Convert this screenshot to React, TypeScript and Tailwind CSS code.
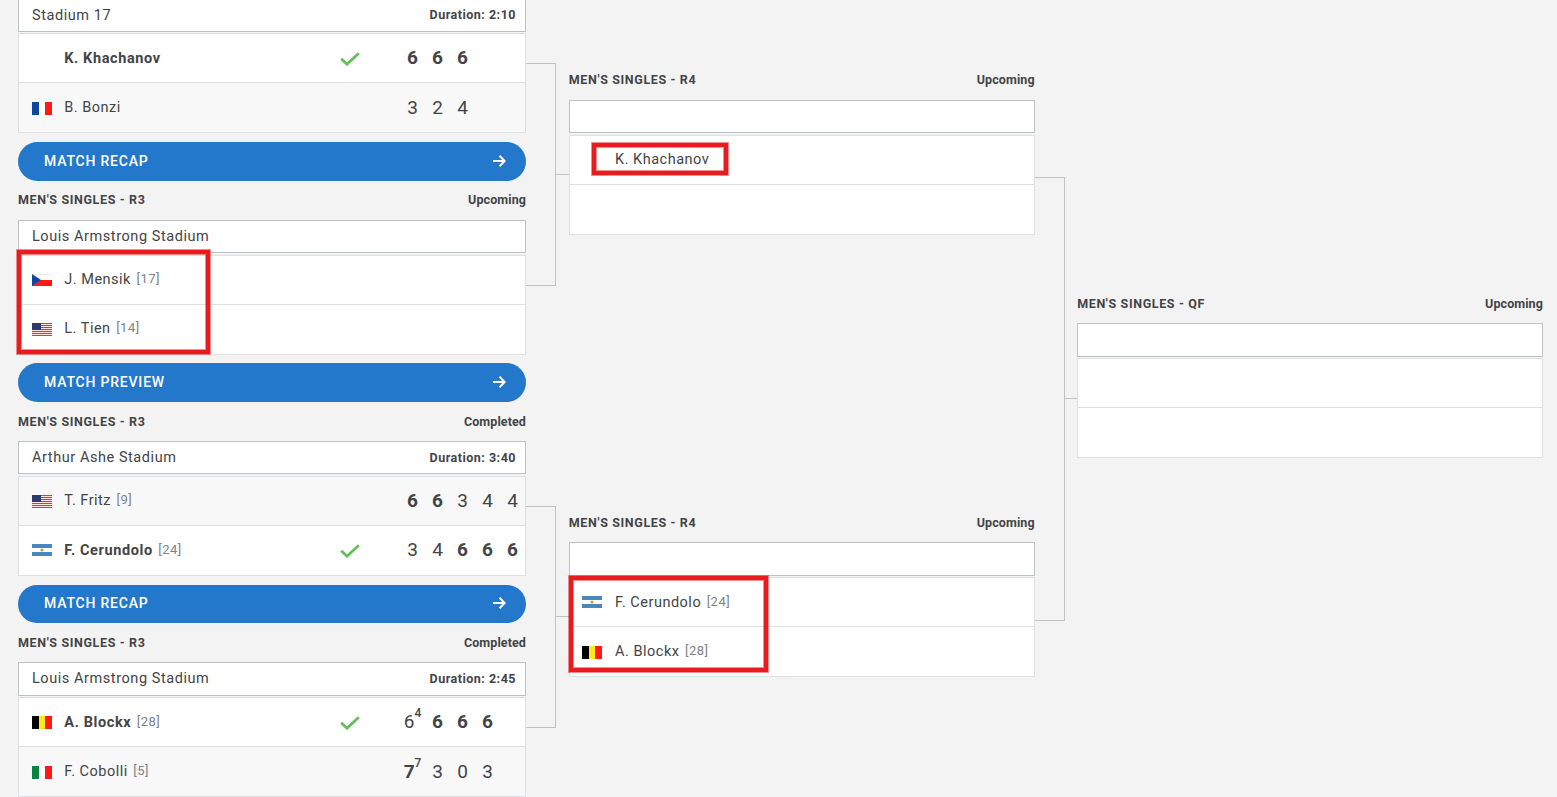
import React from 'react';

type Country = 'FRA' | 'CZE' | 'USA' | 'ARG' | 'BEL' | 'ITA';

type Score = {
  games: number;
  won?: boolean;
  tiebreak?: number;
};

type Player = {
  name?: string;
  country?: Country;
  seed?: number;
  winner?: boolean;
  loser?: boolean;
  scores?: Score[];
};

type MatchProps = {
  round?: string;
  status?: string;
  court?: string;
  duration?: string;
  players: [Player, Player];
  action?: string;
};

const w = (games: number, tiebreak?: number): Score => ({ games, won: true, tiebreak });
const l = (games: number, tiebreak?: number): Score => ({ games, tiebreak });

const stripes: Partial<Record<Country, [string, string, string]>> = {
  FRA: ['#0d479f', '#ffffff', '#ff1a14'],
  BEL: ['#000000', '#ffe81c', '#ff1a14'],
  ITA: ['#0b8442', '#ffffff', '#ff1a14'],
};

function Flag({ country }: { country: Country }) {
  const bands = stripes[country];
  return (
    <svg width="20" height="13" viewBox="0 0 20 13" shapeRendering="crispEdges">
      {bands && (
        <>
          <rect width="7" height="13" fill={bands[0]} />
          <rect x="7" width="6" height="13" fill={bands[1]} />
          <rect x="13" width="7" height="13" fill={bands[2]} />
        </>
      )}
      {country === 'CZE' && (
        <>
          <rect width="20" height="1" fill="#ececec" />
          <rect y="1" width="20" height="5" fill="#fff" />
          <rect y="6" width="20" height="6" fill="#ff1a14" />
          <path d="M0 0L9 6L0 12Z" fill="#0d479f" shapeRendering="auto" />
        </>
      )}
      {country === 'USA' && (
        <>
          <rect width="20" height="13" fill="#ffe3dc" />
          {[0, 2, 4, 6, 8, 10, 12].map((y) => (
            <rect key={y} y={y} width="20" height="1" fill="#f0302a" />
          ))}
          <rect width="9" height="7" fill="#2b3a70" />
        </>
      )}
      {country === 'ARG' && (
        <>
          <rect width="20" height="12" fill="#4a86bf" />
          <rect y="4" width="20" height="4" fill="#fff" />
          <circle cx="10" cy="6" r="1.6" fill="#b5a642" shapeRendering="auto" />
        </>
      )}
    </svg>
  );
}

function PlayerRow({ player, first }: { player: Player; first?: boolean }) {
  const weight = player.winner ? 'font-bold tracking-[0.6px]' : 'tracking-[0.5px]';
  return (
    <div
      className={`flex items-center pl-[12.5px] ${first ? 'h-[48.95px] border-b border-[#dfe0e1]' : 'h-[48.85px]'} ${
        player.loser ? 'bg-[#f8f8f8]' : 'bg-white'
      }`}
    >
      <div className="mt-[1.2px] w-[32.8px] shrink-0">{player.country && <Flag country={player.country} />}</div>
      <div className={`flex-1 whitespace-nowrap pt-[0.8px] text-[14.5px] leading-5 ${weight}`}>
        {player.name}
        {player.seed && (
          <span className="relative -top-px ml-[5.5px] text-[13px] font-normal tracking-[0.5px] text-[#808286]">
            [{player.seed}]
          </span>
        )}
      </div>
      {player.winner && (
        <svg className="mr-[40.5px] mt-[2px]" width="20" height="14" viewBox="0 0 20 14" fill="none">
          <path d="M1.2 6.8L7 12.2L18.8 1.2" stroke="#63bf58" strokeWidth="2.8" />
        </svg>
      )}
      {player.scores && (
        <div className="flex w-[125px] text-[19px] leading-6">
          {player.scores.map((score, i) => (
            <div key={i} className="flex w-[25px] justify-center">
              <span className={score.won ? 'font-bold' : ''}>{score.games}</span>
              {score.tiebreak !== undefined && (
                <span className="-mt-[5px] text-[12px] font-medium leading-4">{score.tiebreak}</span>
              )}
            </div>
          ))}
        </div>
      )}
    </div>
  );
}

function Match({ round, status, court, duration, players, action }: MatchProps) {
  return (
    <div>
      {round && (
        <div className="flex h-[39.05px] items-center justify-between pt-px text-[12.5px] font-bold">
          <span className="tracking-[0.63px]">{round}</span>
          <span className="tracking-[0.1px]">{status}</span>
        </div>
      )}
      <div className="flex h-[33.45px] items-center justify-between border border-[#bfc3c6] bg-white pl-[13px] pr-[9px]">
        <span className="pt-[0.6px] text-[14.5px] tracking-[0.56px]">{court}</span>
        <span className="pt-[0.8px] text-[12.5px] font-bold tracking-[0.5px]">{duration}</span>
      </div>
      <div className="mt-[1.58px] h-[99.8px] border border-[#dfe0e1]">
        <PlayerRow player={players[0]} first />
        <PlayerRow player={players[1]} />
      </div>
      {action && (
        <button className="mt-[8.85px] flex h-[38.6px] w-full items-center justify-between rounded-full bg-[#2478cc] pl-[26px] pr-[20px] text-[14px] font-medium tracking-[0.8px] text-white">
          {action}
          <svg width="13" height="13" viewBox="0 0 13 13" fill="none" stroke="currentColor" strokeWidth="2">
            <path d="M0 6H12M6.5 0.8L11.7 6L6.5 11.2" />
          </svg>
        </button>
      )}
    </div>
  );
}

// Bracket arms joining two matches to the next round
function Connector({ size }: { size: string }) {
  return (
    <div className={`flex items-center ${size}`}>
      <div className="h-full w-[30px] shrink-0 border-y border-r border-[#bfc3c6]" />
      <div className="mb-[0.6px] h-px flex-1 bg-[#bfc3c6]" />
    </div>
  );
}

function Highlight({ className }: { className: string }) {
  return (
    <div
      className={`pointer-events-none absolute border-4 border-[#e81c1e] shadow-[0_0_0_1px_rgba(232,28,30,0.5),inset_0_0_0_1px_rgba(232,28,30,0.5)] ${className}`}
    />
  );
}

export default function App() {
  return (
    <div className="relative flex h-[797px] w-[1557px] overflow-hidden bg-[#f3f3f3] pl-[18px] font-['Roboto','Liberation_Sans',sans-serif] text-[#434447]">
      <div className="-mt-[1.58px] w-[508px] shrink-0">
        <Match
          court="Stadium 17"
          duration="Duration: 2:10"
          action="MATCH RECAP"
          players={[
            { name: 'K. Khachanov', winner: true, scores: [w(6), w(6), w(6)] },
            { name: 'B. Bonzi', country: 'FRA', loser: true, scores: [l(3), l(2), l(4)] },
          ]}
        />
        <Match
          round="MEN'S SINGLES - R3"
          status="Upcoming"
          court="Louis Armstrong Stadium"
          action="MATCH PREVIEW"
          players={[
            { name: 'J. Mensik', country: 'CZE', seed: 17 },
            { name: 'L. Tien', country: 'USA', seed: 14 },
          ]}
        />
        <Match
          round="MEN'S SINGLES - R3"
          status="Completed"
          court="Arthur Ashe Stadium"
          duration="Duration: 3:40"
          action="MATCH RECAP"
          players={[
            { name: 'T. Fritz', country: 'USA', seed: 9, loser: true, scores: [w(6), w(6), l(3), l(4), l(4)] },
            { name: 'F. Cerundolo', country: 'ARG', seed: 24, winner: true, scores: [l(3), l(4), w(6), w(6), w(6)] },
          ]}
        />
        <Match
          round="MEN'S SINGLES - R3"
          status="Completed"
          court="Louis Armstrong Stadium"
          duration="Duration: 2:45"
          players={[
            { name: 'A. Blockx', country: 'BEL', seed: 28, winner: true, scores: [l(6, 4), w(6), w(6), w(6)] },
            { name: 'F. Cobolli', country: 'ITA', seed: 5, loser: true, scores: [w(7, 7), l(3), l(0), l(3)] },
          ]}
        />
      </div>

      <div className="flex w-[42.8px] shrink-0 flex-col gap-[220px] pt-[63px]">
        <Connector size="h-[223px]" />
        <Connector size="h-[222px]" />
      </div>

      <div className="flex w-[465.9px] shrink-0 flex-col gap-[268.72px] pt-[60.75px]">
        <Match round="MEN'S SINGLES - R4" status="Upcoming" players={[{ name: 'K. Khachanov' }, {}]} />
        <Match
          round="MEN'S SINGLES - R4"
          status="Upcoming"
          players={[
            { name: 'F. Cerundolo', country: 'ARG', seed: 24 },
            { name: 'A. Blockx', country: 'BEL', seed: 28 },
          ]}
        />
      </div>

      <div className="w-[42.5px] shrink-0 pt-[177px]">
        <Connector size="h-[444px]" />
      </div>

      <div className="w-[465.8px] shrink-0 pt-[284.15px]">
        <Match round="MEN'S SINGLES - QF" status="Upcoming" players={[{}, {}]} />
      </div>

      <Highlight className="left-[17px] top-[250px] h-[104px] w-[193px]" />
      <Highlight className="left-[592px] top-[143px] h-[32px] w-[136px]" />
      <Highlight className="left-[569px] top-[576px] h-[96px] w-[199px]" />
    </div>
  );
}
